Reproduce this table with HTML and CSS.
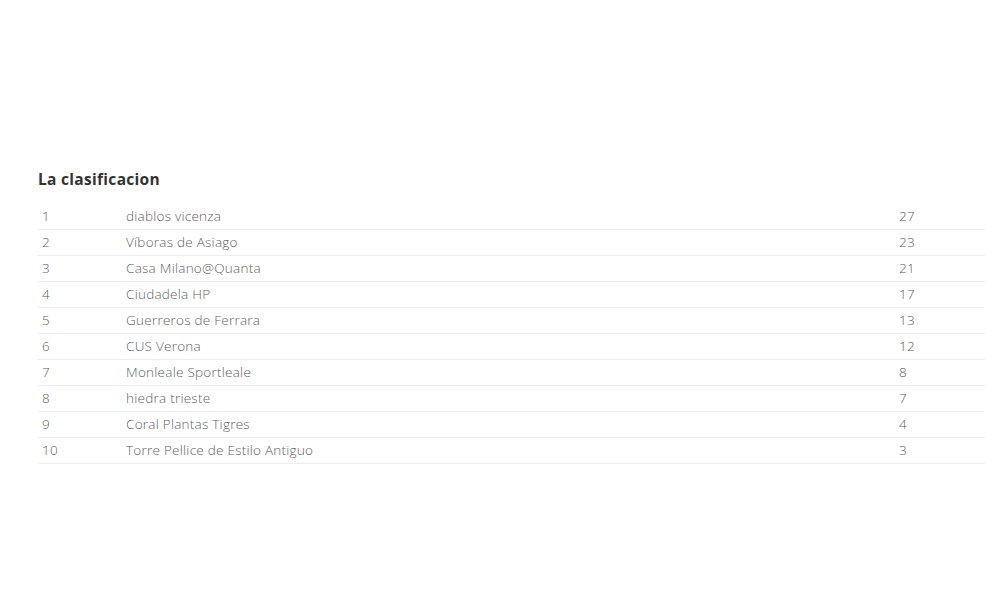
FILE: index.html
```html
<html>
<head>
    <title>La clasificacion</title>
    <link rel="stylesheet" href="styles.css">
</head>
<body>
    <div class="container">
        <h2>La clasificacion</h2>
        <table class="standings">
            <tr><td class="pos">1</td><td class="team">diablos vicenza</td><td class="pts">27</td></tr>
            <tr><td class="pos">2</td><td class="team">Víboras de Asiago</td><td class="pts">23</td></tr>
            <tr><td class="pos">3</td><td class="team">Casa Milano@Quanta</td><td class="pts">21</td></tr>
            <tr><td class="pos">4</td><td class="team">Ciudadela HP</td><td class="pts">17</td></tr>
            <tr><td class="pos">5</td><td class="team">Guerreros de Ferrara</td><td class="pts">13</td></tr>
            <tr><td class="pos">6</td><td class="team">CUS Verona</td><td class="pts">12</td></tr>
            <tr><td class="pos">7</td><td class="team">Monleale Sportleale</td><td class="pts">8</td></tr>
            <tr><td class="pos">8</td><td class="team">hiedra trieste</td><td class="pts">7</td></tr>
            <tr><td class="pos">9</td><td class="team">Coral Plantas Tigres</td><td class="pts">4</td></tr>
            <tr><td class="pos">10</td><td class="team">Torre Pellice de Estilo Antiguo</td><td class="pts">3</td></tr>
        </table>
    </div>
</body>
</html>
```
FILE: styles.css
```css
body {
    font-family: "Open Sans", "Lato", sans-serif;
    background-color: #fff;
    margin: 0;
    padding: 0;
    color: #5f5f5f;
}

.container {
    padding: 168px 15px 0 38px;
}

h2 {
    font-size: 15.5px;
    font-weight: 700;
    letter-spacing: 0.3px;
    color: #333;
    margin: 0 0 13px 0;
    line-height: 22px;
}

.standings {
    width: 100%;
    border-collapse: collapse;
    font-size: 13.5px;
    font-weight: 300;
    letter-spacing: 0.25px;
}

.standings td {
    height: 26px;
    padding: 0 4px;
    border-bottom: 1px solid #eee;
    vertical-align: middle;
}

.standings .pos {
    width: 76px;
}

.standings .pts {
    width: 82px;
}
```
